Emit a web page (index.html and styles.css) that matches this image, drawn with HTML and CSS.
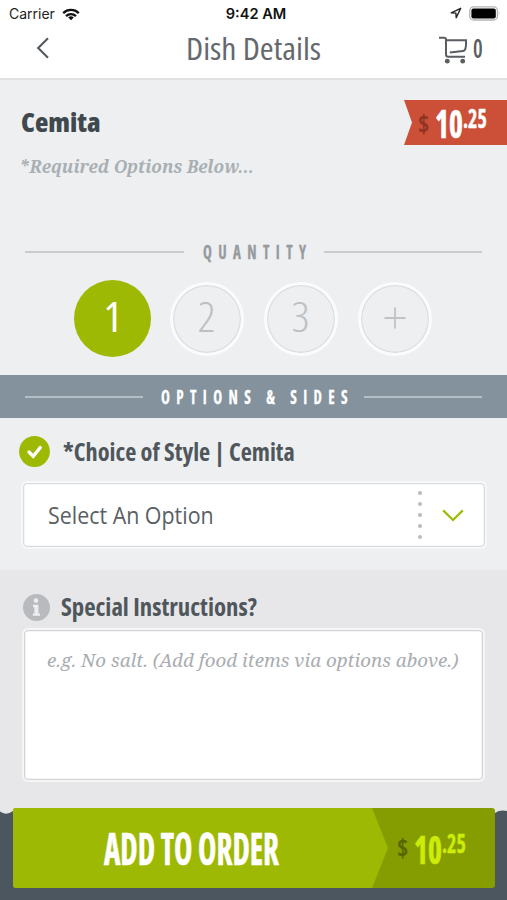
FILE: index.html
```
<!DOCTYPE html>
<html lang="en">
<head>
<meta charset="utf-8">
<title>Dish Details</title>
<link rel="stylesheet" href="styles.css">
</head>
<body>
<div class="screen">
  <div class="status">
    <div class="status-left">
      <span>Carrier</span>
      <svg class="wifi" width="18" height="13" viewBox="0 0 18 13"><g fill="none" stroke="#111" stroke-width="2.3"><path d="M1.2 5.1a11.2 11.2 0 0 1 15.6 0"/><path d="M4 8.1a7.2 7.2 0 0 1 10 0"/></g><path d="M9 12.3 6.2 9.6a4 4 0 0 1 5.6 0z" fill="#111"/></svg>
    </div>
    <span class="clock">9:42 AM</span>
    <div class="status-right">
      <svg width="12" height="12" viewBox="0 0 12 12"><path d="M1.2 5.9 10.7 1.3 6.2 10.8 5.9 6.1z" fill="none" stroke="#222" stroke-width="1.4" stroke-linejoin="round"/></svg>
      <svg width="32" height="15" viewBox="0 0 32 15"><rect x=".8" y=".8" width="27.6" height="13.2" rx="3.8" fill="#fff" stroke="#b4b4b4" stroke-width="1.3"/><rect x="2.4" y="2.4" width="24.4" height="10" rx="2" fill="#000"/><path d="M29.8 5.2q1.6 2.2 0 4.4z" fill="#aaa"/></svg>
    </div>
  </div>
  <header class="nav">
    <svg class="back" width="14" height="22" viewBox="0 0 14 22"><path d="M12 1.2 2.2 11 12 20.8" fill="none" stroke="#555a5e" stroke-width="2.1"/></svg>
    <h1>Dish Details</h1>
    <div class="cart">
      <svg width="30" height="28" viewBox="0 0 30 28"><g fill="none" stroke="#5a5e62" stroke-width="2"><path d="M1 1.8H6.2Q8 1.8 8 3.8V18.5Q8 20.7 10.2 20.7H27"/><path d="M8 4.2H28Q28.6 14.8 25 15L11.8 16.4"/></g><circle cx="9.3" cy="25.2" r="2.4" fill="#5a5e62"/><circle cx="24.7" cy="25.2" r="2.4" fill="#5a5e62"/></svg>
      <span class="count">0</span>
    </div>
  </header>

  <section class="dish">
    <div class="dish-top">
      <div>
        <h2>Cemita</h2>
        <p class="required">*Required Options Below…</p>
      </div>
      <div class="ribbon"><span class="cur">$</span><span class="whole">10</span><span class="cents">.25</span></div>
    </div>
    <div class="divider">
      <span class="line"></span><span class="label quantity-label">QUANTITY</span><span class="line"></span>
    </div>
    <div class="quantities">
      <div class="qty active"><span>1</span></div>
      <div class="qty"><span>2</span></div>
      <div class="qty"><span>3</span></div>
      <div class="qty"><svg width="22" height="22" viewBox="0 0 22 22"><path d="M11 .5v21M.5 11h21" stroke="#bfc3c5" stroke-width="1.8"/></svg></div>
    </div>
  </section>

  <div class="divider band">
    <span class="line"></span><span class="label options-label">OPTIONS &amp; SIDES</span><span class="line"></span>
  </div>

  <section class="choice">
    <div class="field-title">
      <svg width="31" height="31" viewBox="0 0 31 31"><circle cx="15.5" cy="15.5" r="15.4" fill="#9eb903"/><path d="M10 16 14.2 20.2 21.2 11.6" fill="none" stroke="#fff" stroke-width="3.4" stroke-linecap="round"/></svg>
      <h3>*Choice of Style | Cemita</h3>
    </div>
    <div class="select">
      <span class="select-text">Select An Option</span>
      <span class="dots"><i></i><i></i><i></i><i></i><i></i></span>
      <svg width="22" height="13" viewBox="0 0 22 13"><path d="M1.2 1.4 11 11 20.8 1.4" fill="none" stroke="#9eb903" stroke-width="2.2"/></svg>
    </div>
  </section>

  <section class="notes">
    <div class="field-title">
      <svg width="27" height="27" viewBox="0 0 27 27"><circle cx="13.5" cy="13.5" r="13.5" fill="#b8babd"/><circle cx="13" cy="6.6" r="2.3" fill="#eceef0"/><path d="M10 10.8h5.4v8.6h1.6v2.4H9.8v-2.4h1.6v-6.2H10z" fill="#eceef0"/></svg>
      <h3>Special Instructions?</h3>
    </div>
    <div class="textarea">e.g. No salt. (Add food items via options above.)</div>
  </section>

  <footer class="footer">
    <svg class="torn" width="507" height="6" viewBox="0 0 507 6"><path d="M0 0H507V2Q500 .5 495 4L488 6H20L13 2Q6 7 0 2.5z" fill="#e7e7e9"/></svg>
    <div class="order">
      <div class="order-main"><span>ADD TO ORDER</span></div>
      <div class="order-price"><span class="cur">$</span><span class="whole">10</span><span class="cents">.25</span></div>
    </div>
  </footer>
</div>
</body>
</html>
```
FILE: styles.css
```
* { box-sizing: border-box; }
body { margin: 0; font-family: "Open Sans", sans-serif; font-stretch: 75%; color: #4a5157; }
h1, h2, h3, p { margin: 0; white-space: nowrap; }
svg { display: block; flex: none; }
.screen { width: 507px; height: 900px; overflow: hidden; display: flex; flex-direction: column; background: #edeff1; }

.status { height: 28px; flex: none; background: #fff; display: grid; grid-template-columns: 1fr auto 1fr; align-items: center; padding: 0 6px 0 9px; font: 400 14px/28px Inter, sans-serif; color: #222; }
.status-left { display: flex; align-items: center; gap: 7px; }
.clock { font-size: 14.6px; font-weight: 600; color: #111; margin-left: 2px; }
.status-right { display: flex; align-items: center; justify-content: flex-end; gap: 7px; margin-top: -2px; }

.nav { height: 52px; flex: none; background: #fff; border-bottom: 2px solid #e0e1e3; display: grid; grid-template-columns: 1fr 134px 1fr; align-items: center; padding: 0 24px 10px 24px; }
.back { margin-left: 12px; }
.nav h1 { font-size: 31.5px; line-height: 40px; font-weight: 400; color: #65696d; transform: scaleX(1.065); transform-origin: left; margin-left: -1px; }
.cart { display: flex; align-items: center; justify-content: flex-end; gap: 5px; padding-top: 3px; }
.count { font-size: 27px; line-height: 28px; font-weight: 600; width: 10px; transform: scaleX(.8); transform-origin: left; margin-top: -3px; color: #5a5e62; }

.dish { height: 295px; flex: none; }
.dish-top { height: 157px; display: flex; justify-content: space-between; padding: 20px 0 0 21px; }
.dish h2 { font-size: 27px; line-height: 44px; font-weight: 800; color: #3f484d; transform: scaleX(1.02); transform-origin: left; margin-left: -.5px; }
.required { font: italic 700 17.2px/24px "Noto Serif", "DejaVu Serif", serif; color: #a9afb3; margin: 11px 0 0 -2px; }

.ribbon { width: 103px; height: 45px; background: #cc4f37; clip-path: polygon(0 0, 100% 0, 100% 100%, 0 100%, 8px 50%); display: flex; padding-left: 14px; color: #fff; }
.cur { font-size: 24px; line-height: 47px; font-weight: 700; width: 17px; }
.whole { font-size: 39px; line-height: 45px; font-weight: 700; width: 28px; transform: scaleX(.76); transform-origin: left; -webkit-text-stroke: .7px currentColor; }
.cents { font-size: 26px; line-height: 36px; font-weight: 700; transform: scaleX(.77); transform-origin: left; -webkit-text-stroke: .4px currentColor; }
.ribbon .cur { color: #8f3424; }

.divider { display: flex; align-items: center; padding: 0 25px; }
.dish .divider { height: 29px; }
.line { flex: 1; height: 2px; background: #c9cccd; }
.label { font-size: 20px; line-height: 28px; font-weight: 700; letter-spacing: 8.5px; white-space: nowrap; transform: scaleX(.75); transform-origin: left; color: #979b9e; -webkit-text-stroke: .3px currentColor; }
.quantity-label { width: 103px; margin: 0 18px 0 19px; }
.options-label { width: 186px; margin: 0 17px 0 18px; color: #fff; }
.band { height: 43px; flex: none; background: #83929d; }
.band .line { background: #b5bec4; }

.quantities { display: flex; align-items: center; padding: 14px 0 0 74px; gap: 20px; }
.qty { width: 74px; height: 74px; border-radius: 50%; border: 3px solid #fafbfb; box-shadow: inset 0 0 0 1.2px #dadddd; display: flex; align-items: center; justify-content: center; font-size: 42px; line-height: 1; font-weight: 300; color: #bcc0c2; }
.qty span { transform: scaleX(1.05); margin-top: -5px; }
.qty svg { margin-top: -2px; }
.qty.active { width: 77px; height: 77px; border: 0; box-shadow: none; background: #9eb903; color: #fff; font-weight: 400; margin-right: -1px; }

.choice { height: 152px; flex: none; padding: 18px 20px 0 19px; }
.field-title { display: flex; align-items: center; }
.field-title h3 { font-size: 24px; line-height: 31px; font-weight: 700; color: #4f565c; transform-origin: left; }
.choice h3 { margin-left: 13px; transform: scaleX(1.012); }
.select { height: 68px; margin: 14px 0 0 2px; border: 2px solid #f7f8f9; border-radius: 6px; box-shadow: inset 0 0 0 1.3px #d9dbdd; background: #fff; display: flex; align-items: center; padding: 0 21px 0 25px; }
.select-text { width: 370px; font-size: 24px; font-stretch: 100%; font-weight: 400; color: #5a5f64; transform: scaleX(.892); transform-origin: left; margin-top: -2px; }
.dots { display: flex; flex-direction: column; gap: 7px; margin-left: auto; margin-right: 20px; }
.dots i { width: 4px; height: 4px; border-radius: 50%; background: #b9bcbf; }

.notes { height: 240px; flex: none; background: #e7e7e9; padding: 22px 22px 0 23px; }
.notes h3 { margin: -2px 0 0 11px; transform: scaleX(1.03); }
.notes .field-title { height: 31px; }
.textarea { height: 154px; margin-top: 5px; margin-left: -1px; border: 2px solid #f5f5f6; border-radius: 6px; box-shadow: inset 0 0 0 1.3px #d3d4d6; background: #fff; padding: 15px 23px; font: italic 400 18.8px/30px "Noto Serif", "DejaVu Serif", serif; white-space: nowrap; color: #a9adb1; }

.footer { flex: 1; background: #4b565e; margin-top: -1px; display: flex; flex-direction: column; }
.torn { margin-bottom: -7px; }
.order { position: relative; width: 482px; height: 80px; margin-left: 13px; border-radius: 3px; overflow: hidden; display: flex; background: #869d02; }
.order-main { width: 375px; background: #9eb903; clip-path: polygon(0 0, 359px 0, 100% 50%, 359px 100%, 0 100%); padding-left: 91px; }
.order-main span { display: block; width: 175px; white-space: nowrap; font-size: 44px; line-height: 80px; font-weight: 700; color: #fff; transform: scaleX(.707); transform-origin: left; -webkit-text-stroke: .6px currentColor; }
.order-price { display: flex; padding-left: 9px; color: #cdec08; }
.order-price .cur { color: #566700; line-height: 80px; }
.order-price .whole { line-height: 81px; }
.order-price .cents { line-height: 70px; }
```
